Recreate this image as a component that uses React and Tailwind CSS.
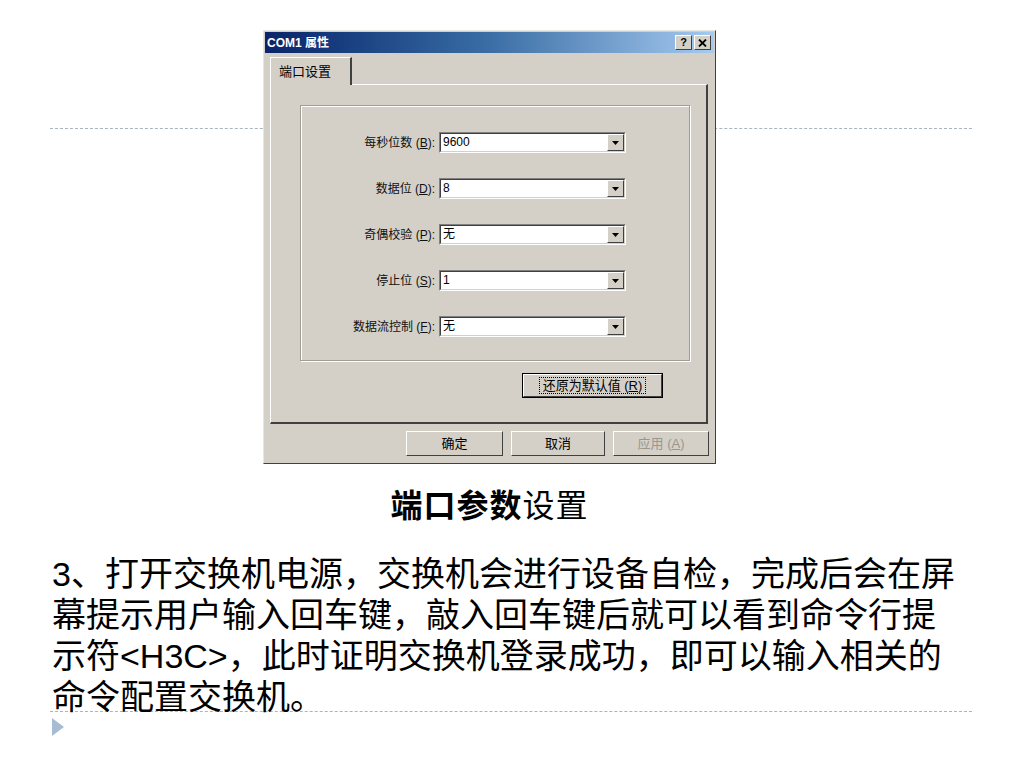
import { useState } from 'react';

const rows = [
  { label: '每秒位数', key: 'B', value: '9600' },
  { label: '数据位', key: 'D', value: '8' },
  { label: '奇偶校验', key: 'P', value: '无' },
  { label: '停止位', key: 'S', value: '1' },
  { label: '数据流控制', key: 'F', value: '无' },
];

const uiFont = { fontFamily: '"Liberation Sans", "Noto Sans CJK SC", sans-serif' };

function Combo({ value }) {
  return (
    <div className="flex h-[21px] w-[187px] border-t border-l border-[#808080] border-b border-r border-b-white border-r-white">
      <div className="flex flex-1 border-t border-l border-[#404040] border-b border-r border-b-[#d4d0c8] border-r-[#d4d0c8] bg-white">
        <span className="flex-1 pl-[2px] text-[12px] leading-[17px] text-black">{value}</span>
        <div className="flex w-[17px] items-center justify-center border-t border-l border-white border-b border-r border-b-[#404040] border-r-[#404040] bg-[#d4d0c8]">
          <svg width="7" height="4" viewBox="0 0 7 4">
            <path d="M0 0h7L3.5 4z" fill="#000" />
          </svg>
        </div>
      </div>
    </div>
  );
}

function WinButton({ children, disabled, className = '' }) {
  return (
    <div
      className={`flex items-center justify-center border-t border-l border-white border-b border-r border-b-[#404040] border-r-[#404040] bg-[#d4d0c8] text-[13px] ${
        disabled ? 'text-[#9a978f]' : 'text-black'
      } ${className}`}
    >
      {children}
    </div>
  );
}

export default function App() {
  const [values] = useState(rows);

  return (
    <div className="relative h-[768px] w-[1024px] overflow-hidden bg-white" style={uiFont}>
      {/* slide decoration lines */}
      <div className="absolute left-[50px] top-[128px] w-[922px] border-t border-dashed border-[#a9b4bf]" />
      <div className="absolute left-[50px] top-[711px] w-[922px] border-t border-dashed border-[#a3b6c9]" />

      <div className="relative flex flex-col">
        {/* dialog */}
        <div className="ml-[263px] mt-[30px] w-[453px]">
          <div className="flex h-[434px] flex-col border-t border-l border-[#e8e6e0] border-b border-r border-b-[#404040] border-r-[#404040] bg-[#d4d0c8]">
            {/* title bar */}
            <div className="mx-[1px] mt-[1px] flex h-[21px] items-center bg-gradient-to-r from-[#0a246a] via-[#3a6ea5] to-[#a6caf0] pl-[2px] pr-[3px]">
              <span className="flex-1 text-[12px] font-bold text-white">COM1 属性</span>
              <div className="flex gap-[2px]">
                <div className="flex h-[15px] w-[17px] items-center justify-center border-t border-l border-white border-b border-r border-b-[#404040] border-r-[#404040] bg-[#d4d0c8] text-[11px] font-bold leading-none text-black">
                  ?
                </div>
                <div className="flex h-[15px] w-[17px] items-center justify-center border-t border-l border-white border-b border-r border-b-[#404040] border-r-[#404040] bg-[#d4d0c8]">
                  <svg width="9" height="8" viewBox="0 0 9 8">
                    <path d="M1 0.5l7 7M8 0.5l-7 7" stroke="#000" strokeWidth="1.8" />
                  </svg>
                </div>
              </div>
            </div>

            {/* tab strip */}
            <div className="ml-[6px] mt-[4px] flex h-[27px]">
              <div className="relative z-10 -mb-[1px] flex w-[82px] items-center border-t border-l border-white border-r-2 border-r-[#404040] bg-[#d4d0c8] pl-[8px] text-[13px] text-black">
                端口设置
              </div>
            </div>

            {/* tab panel */}
            <div className="ml-[6px] flex h-[340px] w-[438px] flex-col border-t border-l border-white border-b-2 border-r-2 border-b-[#404040] border-r-[#404040]">
              <div className="ml-[29px] mt-[20px] h-[256px] w-[390px] border border-[#a09d95] shadow-[inset_1px_1px_0_#ffffff,1px_1px_0_#ffffff]">
                <div className="mt-[26px] flex flex-col gap-[25px]">
                  {values.map((r) => (
                    <div key={r.key} className="flex h-[21px] items-center">
                      <span className="w-[138px] pr-[4px] text-right text-[12px] text-[#111]">
                        {r.label} (<span className="underline">{r.key}</span>):
                      </span>
                      <Combo value={r.value} />
                    </div>
                  ))}
                </div>
              </div>
              <div className="mr-[43px] mt-[12px] flex justify-end">
                <div className="border border-black">
                  <WinButton className="h-[23px] w-[139px]">
                    <span className="border border-dotted border-black px-[3px] leading-[15px]">
                      还原为默认值 (<span className="underline">R</span>)
                    </span>
                  </WinButton>
                </div>
              </div>
            </div>

            {/* dialog buttons */}
            <div className="mr-[6px] mt-[7px] flex justify-end gap-[8px]">
              <WinButton className="h-[25px] w-[97px]">确定</WinButton>
              <WinButton className="h-[25px] w-[94px]">取消</WinButton>
              <WinButton className="h-[25px] w-[96px]" disabled>
                应用 (<span className="underline">A</span>)
              </WinButton>
            </div>
          </div>

          {/* caption */}
          <div className="mt-[24px] text-center text-[32px] leading-[36px] tracking-[1px] text-black">
            <span className="font-bold">端口参数</span>设置
          </div>
        </div>

        {/* body text */}
        <div className="ml-[52px] mt-[30px] text-[34px] leading-[41px] text-black">
          <div>3、打开交换机电源，交换机会进行设备自检，完成后会在屏</div>
          <div>幕提示用户输入回车键，敲入回车键后就可以看到命令行提</div>
          <div>示符&lt;H3C&gt;，此时证明交换机登录成功，即可以输入相关的</div>
          <div>命令配置交换机。</div>
        </div>

        {/* bullet triangle */}
        <div className="ml-[52px]">
          <svg width="12" height="18" viewBox="0 0 12 18">
            <path d="M0 0L12 9L0 18z" fill="#a7bcd3" />
          </svg>
        </div>
      </div>
    </div>
  );
}
